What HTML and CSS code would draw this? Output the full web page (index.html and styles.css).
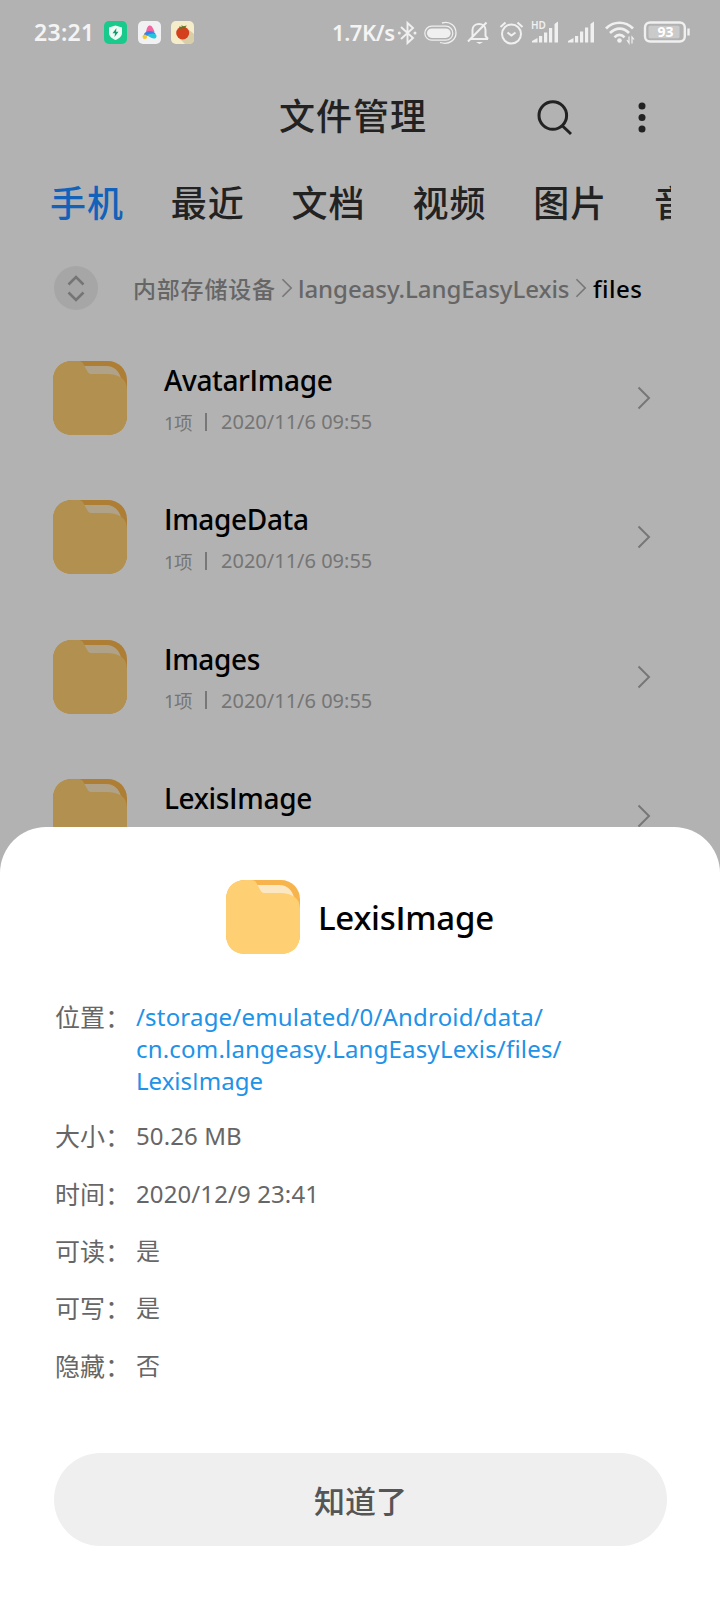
FILE: index.html
```html
<!DOCTYPE html>
<html lang="zh-CN">
<head>
<meta charset="utf-8">
<title>文件管理</title>
<link rel="stylesheet" href="styles.css">
</head>
<body>
<svg class="defs" width="0" height="0" aria-hidden="true">
  <symbol id="folder" viewBox="0 0 74 74">
    <rect class="f-back" width="74" height="74" rx="19"/>
    <path class="f-paper" d="M29 5H53C62 5 66 11 68 17L60 15H34Z"/>
    <path class="f-front" d="M0 20C0 7 7 0 20 0H25C29 0 30 2 32 6L34.500 10.500C35.500 12.500 37 13 39 13H54C66 13 74 18 74 29V54C74 67 67 74 54 74H20C7 74 0 67 0 54Z"/>
  </symbol>
  <symbol id="chev" viewBox="0 0 14 24"><path d="M1.5 1.5L12 12L1.5 22.5" fill="none" stroke="currentColor" stroke-width="2"/></symbol>
</svg>
<div class="screen">
  <header class="status">
    <span class="clock">23:21</span>
    <svg class="app" viewBox="0 0 23 23"><rect width="23" height="23" rx="5" fill="#1ac98c"/><path d="M11.5 4.5L18 6.5V12C18 15.500 15 17.500 11.500 19C8 17.500 5 15.500 5 12V6.500Z" fill="#effcf6"/><path d="M12.500 7L8.500 12.300H11L10.500 16L14.500 10.700H12Z" fill="#159a70"/></svg>
    <svg class="app" viewBox="0 0 23 23"><rect width="23" height="23" rx="5" fill="#f1f1f3"/><path d="M8 11C9 6 10 4.500 12 4.500S15.500 8 16.500 11Z" fill="#f0649f"/><path d="M6 13C8 9 15 9 17.500 12.500L14 16C11 14 8 15 6 15Z" fill="#3a7fe8"/><path d="M9 14C12 12.500 18 11 18.500 15C18.500 19 13 18 9 14Z" fill="#25c5dc"/><circle cx="6.800" cy="15.800" r="2.300" fill="#f6c92c"/></svg>
    <svg class="app" viewBox="0 0 23 23"><rect width="23" height="23" rx="5" fill="#f5edc9"/><path d="M17 8L23 13V18Q23 23 18 23H14L8 17Z" fill="#d8cfa9"/><circle cx="11.700" cy="12" r="6.500" fill="#d43f1c"/><path d="M8 5.500L11.500 6L10 4L12.500 5.300L16 4.500L14 6.500L15 7.500L12 7L9 8Z" fill="#5f7828"/></svg>
    <span class="speed">1.7K/s</span>
    <svg class="sysicons" viewBox="0 0 296 30" fill="none" stroke="#f0f0f0" stroke-width="2">
      <path d="M4 8L16 19L10.500 24V4L16 9L4 20" stroke-width="1.900"/><circle cx="2.300" cy="14" r="1.500" fill="#f0f0f0" stroke="none"/><circle cx="18" cy="14" r="1.500" fill="#f0f0f0" stroke="none"/>
      <rect x="27.800" y="7.200" width="28" height="14" rx="7" stroke-width="1.200"/><rect x="30" y="9.400" width="23.600" height="9.600" rx="4.800" fill="#f0f0f0" stroke="none"/><path d="M45 4C54 1.500 59 8 59 14S53 26.500 43 23.500" stroke-width="1.300"/>
      <path d="M73 20H91M75.500 18V11C75.500 3 88.500 3 88.500 11V17L91 20M71 22.500L89.500 3.500"/><path d="M79 23H86L82.500 25Z" fill="#f0f0f0" stroke="none"/>
      <circle cx="114.500" cy="15" r="9.500"/><path d="M110.500 13.500L114.500 16.500L118.500 13.500M103.500 8L108.500 3.500M120.500 3.500L125.500 8"/>
      <g fill="#f0f0f0" stroke="none"><path d="M135 23.500V22L140.500 19V23.500ZM142 17H145.200V23.500H142ZM147 13.500H150.200V23.500H147ZM152 9H155.200V23.500H152ZM157.500 5L161 2.500V23.500H157.500Z"/>
      <path d="M171 23.500V22L176.500 19V23.500ZM178 17H181.200V23.500H178ZM183 12.500H186.200V23.500H183ZM188 8.500H191.200V23.500H188ZM193.500 5L197 2.500V23.500H193.500Z"/></g>
      <text x="134" y="10" class="hd">HD</text>
      <path d="M209 9.500C216.500 1.800 228.500 1.800 236 9.500M213 14C219 8.200 226.500 8.200 232 14M217.500 18.300C220.500 15 224.500 15 227.500 18.300" stroke-width="2.700"/><circle cx="222.500" cy="21.500" r="2.300" fill="#f0f0f0" stroke="none"/><path d="M232 17.500V24L230 21M235 24.500V18L237 20.500" stroke-width="1.200"/>
      <rect x="248" y="3.500" width="39.800" height="19" rx="5" stroke-width="2.400"/><rect x="251.500" y="6.800" width="31" height="12.500" rx="1.500" fill="#cacaca" stroke="none"/><path d="M291.500 9.500V16.500" stroke-width="2.400"/>
      <text x="268.500" y="18.200" class="pct">93</text>
    </svg>
  </header>

  <div class="appbar">
    <h1 class="title">文件管理</h1>
    <svg class="search" viewBox="0 0 36 36" fill="none" stroke="#222" stroke-width="3"><circle cx="15.800" cy="15.500" r="13.800"/><path d="M25 25.500L34 34"/></svg>
    <svg class="more" viewBox="0 0 8 32" fill="#222"><circle cx="4" cy="4" r="3.500"/><circle cx="4" cy="15.500" r="3.500"/><circle cx="4" cy="27" r="3.500"/></svg>
  </div>

  <nav class="tabs">
    <span class="tab active">手机</span><span class="tab">最近</span><span class="tab">文档</span><span class="tab">视频</span><span class="tab">图片</span><span class="tab">音</span>
  </nav>

  <div class="crumbs">
    <svg class="sort" viewBox="0 0 44 44" fill="none" stroke="#757575" stroke-width="2.600"><circle cx="22" cy="22" r="22" fill="#a6a6a6" stroke="none"/><path d="M14.500 18.500L22 11L29.500 18.500M14.500 26.500L22 34L29.500 26.500"/></svg>
    <span class="crumb root">内部存储设备</span>
    <svg class="sep"><use href="#chev"/></svg>
    <span class="crumb pkg">langeasy.LangEasyLexis</span>
    <svg class="sep"><use href="#chev"/></svg>
    <span class="crumb current">files</span>
  </div>

  <main class="list">
    <div class="row"><svg class="folder dim"><use href="#folder"/></svg><div class="info"><div class="name">Avatar<span class="i">I</span>mage</div><div class="meta"><span class="count">1项</span><i class="bar"></i><span class="date">2020/11/6 09:55</span></div></div><svg class="go"><use href="#chev"/></svg></div>
    <div class="row"><svg class="folder dim"><use href="#folder"/></svg><div class="info"><div class="name"><span class="i">I</span>mageData</div><div class="meta"><span class="count">1项</span><i class="bar"></i><span class="date">2020/11/6 09:55</span></div></div><svg class="go"><use href="#chev"/></svg></div>
    <div class="row"><svg class="folder dim"><use href="#folder"/></svg><div class="info"><div class="name"><span class="i">I</span>mages</div><div class="meta"><span class="count">1项</span><i class="bar"></i><span class="date">2020/11/6 09:55</span></div></div><svg class="go"><use href="#chev"/></svg></div>
    <div class="row"><svg class="folder dim"><use href="#folder"/></svg><div class="info"><div class="name">Lexis<span class="i">I</span>mage</div></div><svg class="go"><use href="#chev"/></svg></div>
  </main>

  <section class="sheet">
    <div class="sheet-head"><svg class="folder"><use href="#folder"/></svg><h2 class="sheet-title">Lexis<span class="i">I</span>mage</h2></div>
    <dl class="details">
      <div class="item first"><dt>位置：</dt><dd class="path">/storage/emulated/0/Android/data/<br>cn.com.langeasy.LangEasyLexis/files/<br><span class="short">Lexis<span class="i">I</span>mage</span></dd></div>
      <div class="item"><dt>大小：</dt><dd>50.26 MB</dd></div>
      <div class="item"><dt>时间：</dt><dd>2020/12/9 23:41</dd></div>
      <div class="item"><dt>可读：</dt><dd>是</dd></div>
      <div class="item"><dt>可写：</dt><dd>是</dd></div>
      <div class="item"><dt>隐藏：</dt><dd>否</dd></div>
    </dl>
    <button class="ok">知道了</button>
  </section>
</div>
</body>
</html>
```

FILE: styles.css
```css
* { box-sizing: border-box; margin: 0; padding: 0; }
body { font-family: "Noto Sans", "Noto Sans CJK SC", sans-serif; background: #b2b2b2; }
.defs { position: absolute; }
.screen { position: relative; width: 720px; height: 1600px; overflow: hidden; background: #b2b2b2; white-space: nowrap; }
svg { display: block; flex: none; }
/* capital I without serifs */
.i { font-family: "Open Sans", sans-serif; }

.status { display: flex; align-items: center; height: 64px; padding-left: 34px; color: #f4f4f4; font-weight: 600; }
.clock { width: 70px; font-size: 23px; letter-spacing: .3px; }
.app { width: 23px; height: 23px; margin-right: 10.5px; }
.app + .app + .app { margin-left: -.5px; }
.speed { width: 65px; margin-left: 128px; font-size: 22px; letter-spacing: -.4px; }
.sysicons { width: 296px; height: 30px; margin-top: 3px; }
.hd { font-size: 10px; font-weight: 600; fill: #f0f0f0; stroke: none; }
.pct { font-size: 14px; font-weight: 700; fill: #fff; stroke: none; text-anchor: middle; }

.appbar { display: flex; align-items: center; height: 106px; padding: 0 0 0 279px; }
.title { width: 258px; font-size: 36px; font-weight: 500; letter-spacing: 1px; color: #222; line-height: 54px; }
.search { width: 36px; height: 36px; margin-top: 1px; }
.more { width: 8px; height: 32px; margin-top: 2px; margin-left: 65px; }

.tabs { display: flex; width: 621px; height: 66px; margin-left: 50px; overflow: hidden; }
.tab { flex: none; width: 120.8px; font-size: 36px; font-weight: 500; letter-spacing: 1px; line-height: 68px; color: #222; }
.tab.active { color: #1262ba; }

.crumbs { display: flex; align-items: center; height: 104px; padding: 0 0 0 54px; font-size: 24px; }
.sort { width: 44px; height: 44px; }
.crumb { flex: none; color: #666; font-weight: 500; }
.root { width: 148px; margin-left: 35px; font-size: 23px; letter-spacing: .8px; }
.sep { width: 12px; height: 20px; color: #777; }
.pkg { width: 270px; margin-left: 5px; margin-right: 7px; letter-spacing: -.06px; }
.current { margin-left: 6px; color: #000; letter-spacing: .5px; }

.row { display: flex; height: 139.3px; padding: 21px 0 0 53px; }
.folder { width: 74px; height: 74px; }
.f-back { fill: #f8b44c; }
.f-paper { fill: #fce7c3; }
.f-front { fill: #fecf73; }
.dim { filter: brightness(.7); }
.info { width: 474px; padding-left: 37px; }
.name { font-size: 28px; font-weight: 500; line-height: 39px; letter-spacing: -.35px; color: #000; }
.name .i, .sheet-title .i { font-weight: 600; }
.meta { display: flex; align-items: center; height: 43px; font-size: 20px; color: #757575; }
.count { width: 41px; font-size: 18.500px; letter-spacing: -.6px; }
.bar { width: 2px; height: 18px; background: #777; }
.date { margin-left: 14px; }
.go { width: 14px; height: 24px; margin-top: 25px; margin-left: 36px; color: #777; }

.sheet { position: absolute; left: 0; right: 0; bottom: 0; height: 773px; padding: 53px 54px 54px; border-radius: 46px 46px 0 0; background: #fff; }
.sheet-head { display: flex; align-items: center; height: 74px; padding-left: 172px; }
.sheet-title { margin-left: 18px; font-size: 33px; font-weight: 500; letter-spacing: -.25px; color: #000; }
.details { height: 499px; padding-top: 47px; color: #666; }
.item { display: flex; margin-bottom: 25.400px; font-size: 24px; line-height: 32px; }
.item.first { margin-bottom: 23.200px; }
.item dt { width: 82px; padding-left: 1px; font-size: 25px; letter-spacing: .1px; }
.item dd { letter-spacing: .1px; }
.item .path { color: #2092e8; letter-spacing: .19px; }
.short { letter-spacing: 0; }
.ok { display: block; width: 613px; height: 93px; border: 0; border-radius: 47px; background: #efefef; color: #555; font: 500 31px/91px "Noto Sans CJK SC", sans-serif; }
```
